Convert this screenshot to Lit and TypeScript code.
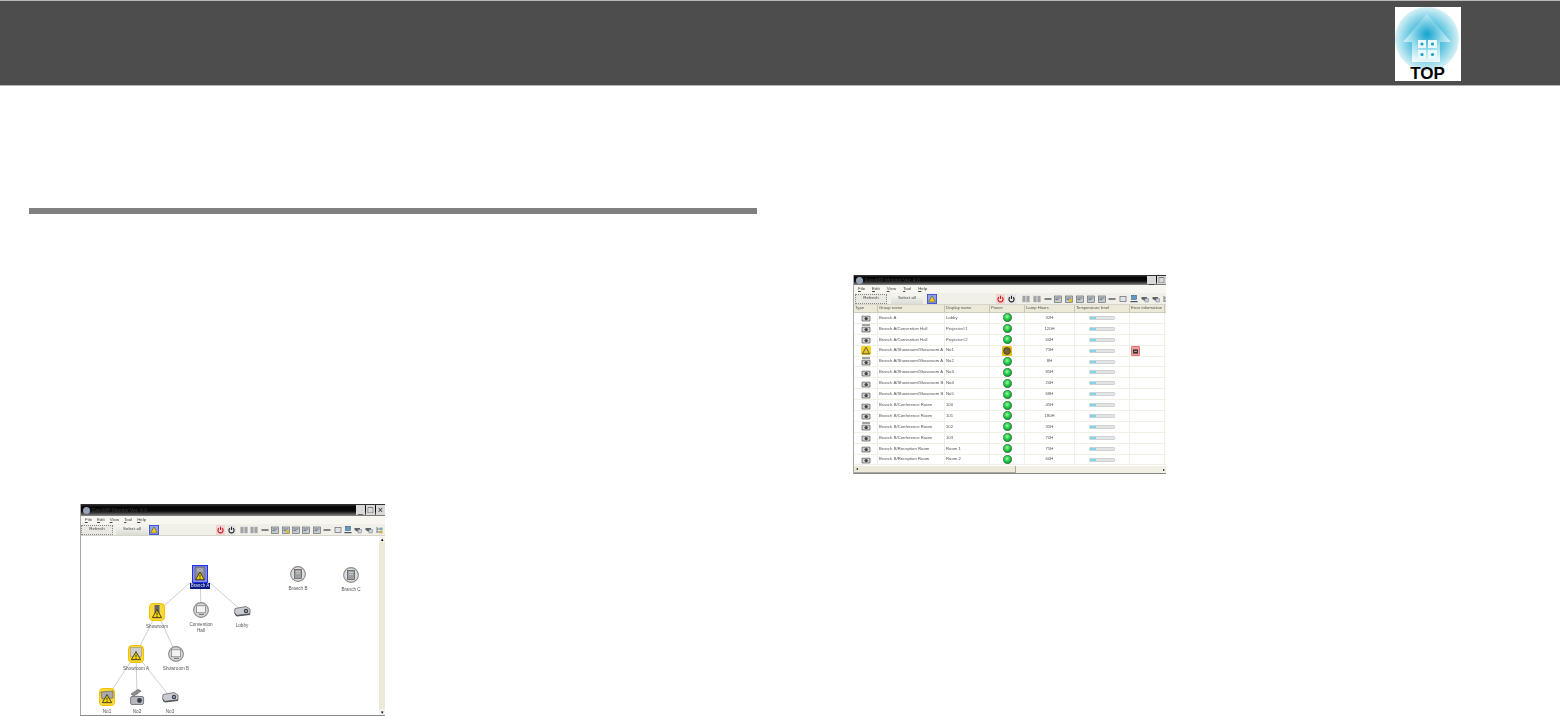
import { LitElement, html, css, svg } from "lit";
import { customElement } from "lit/decorators.js";

const warnTri = (x: number, y: number, s: number) => svg`
  <path d="M${x} ${y - s}L${x + s} ${y + s * 0.75}H${x - s}Z" fill="#f7d400" stroke="#222" stroke-width=".8" stroke-linejoin="round"/>
  <path d="M${x} ${y - s * 0.4}V${y + s * 0.25}M${x} ${y + s * 0.4}V${y + s * 0.6}" stroke="#111" stroke-width=".8"/>`;

const groupIcon = svg`<svg class="ic" viewBox="0 0 16 16" width="16" height="16">
  <circle cx="8" cy="8" r="7.4" fill="#dcdcdc" stroke="#8c8c8c" stroke-width="1.1"/>
  <rect x="4.4" y="3.6" width="7.2" height="8.8" fill="#9aa0a4" stroke="#555" stroke-width=".7"/>
  <path d="M6 5.5h4M6 7.3h4" stroke="#d8d8d8" stroke-width=".7"/></svg>`;

const roomIcon = svg`<svg class="ic" viewBox="0 0 16 16" width="16" height="16">
  <circle cx="8" cy="8" r="7.4" fill="#d6d6d6" stroke="#8c8c8c" stroke-width="1.1"/>
  <rect x="3.6" y="3.8" width="8.8" height="7" fill="#f3f3f3" stroke="#777" stroke-width=".7"/>
  <path d="M6 12.4h5" stroke="#666" stroke-width=".9"/></svg>`;

const projIcon = svg`<svg class="ic" viewBox="0 0 18 12" width="18" height="12">
  <path d="M2 3.5L13 1.5L17 4V9L4 10.5L1.5 8.5Z" fill="#c9cbd0" stroke="#55585e" stroke-width=".7"/>
  <path d="M2 8L4 10L17 8.6V10L4 11.6L2 10Z" fill="#55585e"/>
  <circle cx="13" cy="6" r="2.2" fill="#3b3f47"/><circle cx="13" cy="6" r="1" fill="#a8b4c4"/></svg>`;

const proj2Icon = svg`<svg class="ic" viewBox="0 0 16 18" width="16" height="18">
  <path d="M2 6L9 1.5L12 3L5 8Z" fill="#8a8d92" stroke="#555" stroke-width=".6"/>
  <rect x="1.6" y="8.5" width="13" height="8" rx="1.4" fill="#b5b8bd" stroke="#55585e" stroke-width=".7"/>
  <circle cx="10.5" cy="12.5" r="2.4" fill="#3b3f47"/></svg>`;

const warnBox = (inner: unknown, w = 16, h = 18) => svg`<svg class="ic" viewBox="0 0 16 18" width="${w}" height="${h}">
  <rect x=".5" y=".5" width="15" height="17" rx="3.4" fill="#f9d83a" stroke="#f2c200" stroke-width="1"/>
  ${inner}${warnTri(8, 11.2, 4.6)}</svg>`;

const NODES: [number, number, string, unknown, string?][] = [
  [200, 574, "Branch A", svg`<svg class="ic" viewBox="0 0 16 18" width="16" height="18">
     <rect x=".5" y=".5" width="15" height="17" fill="#8f95ef" stroke="#2530e8" stroke-width="1.2"/>
     <rect x="3" y="2" width="10" height="13" fill="#8d8f98" stroke="#44464f" stroke-width=".5"/>
     <path d="M5 4h6M5 6h6" stroke="#d6d6d6" stroke-width=".7"/>${warnTri(8, 11.4, 4.4)}</svg>`, "sel"],
  [157, 612, "Showroom", warnBox(svg`<rect x="5.5" y="2" width="5" height="13" fill="#666"/>`)],
  [201, 610, "Convention\nHall", roomIcon],
  [242, 611, "Lobby", projIcon],
  [136, 654, "Showroom A", warnBox(svg`<rect x="2.6" y="2.4" width="10.8" height="9" fill="#cfcfcf" stroke="#888" stroke-width=".5"/>`)],
  [176, 654, "Showroom B", roomIcon],
  [107, 697, "No1", warnBox(svg`<path d="M2 4L14 3V10L3 11Z" fill="#aaa" stroke="#555" stroke-width=".6"/>`)],
  [137, 697, "No2", proj2Icon],
  [170, 697, "No3", projIcon],
  [298, 574, "Branch B", groupIcon],
  [351, 575, "Branch C", groupIcon],
];
const EDGES = [[0, 1], [0, 2], [0, 3], [1, 4], [1, 5], [4, 6], [4, 7], [4, 8]];
const OX = 81, OY = 536;

const ROWS: [string, string, string, string, string?][] = [
  ["a", "Branch A", "Lobby", "32H"],
  ["b", "Branch A/Convention Hall", "Projector#1", "120H"],
  ["c", "Branch A/Convention Hall", "Projector#2", "60H"],
  ["w", "Branch A/Showroom/Showroom A", "No1", "75H", "e"],
  ["b", "Branch A/Showroom/Showroom A", "No2", "8H"],
  ["c", "Branch A/Showroom/Showroom A", "No3", "85H"],
  ["a", "Branch A/Showroom/Showroom B", "No4", "20H"],
  ["c", "Branch A/Showroom/Showroom B", "No5", "68H"],
  ["a", "Branch B/Conference Room", "100", "45H"],
  ["c", "Branch B/Conference Room", "101", "180H"],
  ["b", "Branch B/Conference Room", "102", "35H"],
  ["c", "Branch B/Conference Room", "103", "70H"],
  ["a", "Branch B/Reception Room", "Room 1", "75H"],
  ["c", "Branch B/Reception Room", "Room 2", "60H"],
];

const rowIcon = (k: string) => k === "w"
  ? svg`<svg class="ic" viewBox="0 0 10 9" width="10" height="9"><rect width="10" height="9" rx="1.4" fill="#f5d22a"/><path d="M5 1.2L8.6 7.8H1.4Z" fill="#e0c030" stroke="#333" stroke-width=".7"/></svg>`
  : svg`<svg class="ic" viewBox="0 0 10 9" width="10" height="9">
      ${k === "b" ? svg`<path d="M1 1h8" stroke="#444" stroke-width="1"/>` : ""}
      <path d="M1 3.2H9V8H1Z" fill="#d2d2d2" stroke="#555" stroke-width=".7"/>
      <circle cx="5.2" cy="5.6" r="1.7" fill="#444"/></svg>`;

const POWER = svg`<svg class="ic" viewBox="0 0 9 9" width="9" height="9"><defs><radialGradient id="g" cx=".45" cy=".4" r=".6"><stop offset="0" stop-color="#a8f5a8"/><stop offset=".55" stop-color="#1ccf42"/><stop offset="1" stop-color="#0d8a2e"/></radialGradient></defs><circle cx="4.5" cy="4.5" r="4.2" fill="url(#g)" stroke="#4a5a4d" stroke-width=".6"/></svg>`;
const POWERW = svg`<svg class="ic" viewBox="0 0 10 10" width="10" height="10"><rect width="10" height="10" rx="1.6" fill="#e8b917"/><circle cx="5" cy="5" r="3.4" fill="#77643a" stroke="#333" stroke-width=".7"/></svg>`;
const ERR = svg`<svg class="ic" viewBox="0 0 9 10" width="9" height="10"><rect x=".3" y=".3" width="8.4" height="9.4" rx="1.2" fill="#f1a0a0" stroke="#d23a3a" stroke-width=".7"/><path d="M2 3.4H7V7.6H2Z" fill="#333"/><path d="M3 5.4h3" stroke="#ddd" stroke-width=".7"/></svg>`;

const tbIcon = (i: number) => {
  const kinds = ["grid", "grid", "line", "proj", "projy", "proj", "proj", "proj", "line", "box", "net", "tag", "tag", "tree"];
  const k = kinds[i];
  return svg`<svg class="tb" viewBox="0 0 8 8" width="8" height="8">
    ${k === "grid" ? svg`<rect width="8" height="8" fill="#e3e3e3"/><path d="M.5 2h3M4.5 2h3M.5 4h3M4.5 4h3M.5 6h3M4.5 6h3" stroke="#555" stroke-width=".9"/>` : ""}
    ${k === "line" ? svg`<path d="M.5 4h7" stroke="#555" stroke-width="1.4"/>` : ""}
    ${k === "proj" || k === "projy" ? svg`<rect x=".4" y="1" width="7.2" height="6.4" fill="#c4cbcf" stroke="#5a5f63" stroke-width=".6"/><path d="M1.4 3h5M1.4 4.6h3" stroke="#556" stroke-width=".7"/>` : ""}
    ${k === "projy" ? svg`<circle cx="5.6" cy="5.6" r="1.6" fill="#d9c01a"/>` : ""}
    ${k === "box" ? svg`<rect x="1" y="1.4" width="6" height="5.2" fill="#dfe5e5" stroke="#667" stroke-width=".7"/>` : ""}
    ${k === "net" ? svg`<rect x="1.6" y=".4" width="4.8" height="4" fill="#5b9bd0" stroke="#345" stroke-width=".5"/><path d="M.4 6.6h7.2" stroke="#456" stroke-width="1.2"/>` : ""}
    ${k === "tag" ? svg`<path d="M.5 2H6V5.6H3L.5 4Z" fill="#5d6468"/><rect x="4" y="3.4" width="3.6" height="3.6" fill="#c6d2d6" stroke="#667" stroke-width=".4"/>` : ""}
    ${k === "tree" ? svg`<path d="M2 1v6M2 3h3M2 6h3" stroke="#667" stroke-width=".8"/><rect x="4.6" y="1.6" width="3" height="2.6" fill="#6fb4b0"/><rect x="4.6" y="4.8" width="3" height="2.6" fill="#d2b04a"/>` : ""}
  </svg>`;
};

const PWR_R = svg`<svg class="ic" viewBox="0 0 9 10" width="9" height="10"><rect width="9" height="10" fill="#f1d3d3"/><path d="M2.9 3.2A2.6 2.6 0 1 0 6.1 3.2M4.5 1.8V5" fill="none" stroke="#d01818" stroke-width="1.1"/></svg>`;
const PWR_K = svg`<svg class="ic" viewBox="0 0 9 10" width="9" height="10"><rect width="9" height="10" fill="#e6e6e6"/><path d="M2.9 3.2A2.6 2.6 0 1 0 6.1 3.2M4.5 1.8V5" fill="none" stroke="#222" stroke-width="1.1"/></svg>`;
const WARN_T = svg`<svg class="ic" viewBox="0 0 10 10" width="10" height="10"><rect x=".4" y=".4" width="9.2" height="9.2" fill="#8f9fe8" stroke="#2f3fd4" stroke-width=".8"/><path d="M5 1.8L8.4 8H1.6Z" fill="#eec91a" stroke="#444" stroke-width=".5"/></svg>`;

@customElement("app-root")
export class AppRoot extends LitElement {
  static styles = css`
    :host { display: block; width: 1560px; height: 716px; overflow: hidden; background: #fff; font-family: "Liberation Sans", Arial, sans-serif; }
    .header { height: 86px; box-sizing: border-box; background: #4d4d4d; border-top: 1px solid #b9b9b9; border-bottom: 1px solid #b4b4b4; display: flex; justify-content: flex-end; padding: 6px 99px 0 0; }
    .logo { display: block; }
    .main { display: grid; grid-template-columns: 786px 1fr; }
    .left { padding-left: 29px; }
    .rule { width: 728px; height: 6px; margin-top: 122px; background: #808080; }
    .win { box-sizing: border-box; background: #fff; overflow: hidden; filter: blur(.4px); display: flex; flex-direction: column; color: #555; font-size: 4.4px; line-height: 1; }
    .win-l { width: 305px; height: 212px; margin: 290px 0 0 51px; border-left: 1px solid #a8a8a8; border-bottom: 1px solid #888; }
    .win-r { width: 313px; height: 199px; margin: 189px 0 0 67px; border-left: 1px solid #a8a8a8; border-bottom: 1px solid #888; }
    .title { height: 12px; flex: none; background: linear-gradient(#3a3a3a, #050505 25%, #0c0c0c 60%, #8a8a8a); display: flex; align-items: center; padding: 0 0 0 2px; gap: 2px; }
    .win-r .title { height: 10px; }
    .appicon { width: 7px; height: 7px; border-radius: 50%; background: #98a2b8; }
    .appname { color: #3a3a3a; font-size: 5px; }
    .ctl { margin-left: auto; display: flex; gap: 1px; align-self: stretch; padding: 1px 0; }
    .ctl span { width: 9px; background: #d9d9d9; color: #222; font-size: 9px; display: flex; align-items: center; justify-content: center; }
    .menu { height: 8px; flex: none; display: flex; align-items: center; background: #f7f6f0; }
    .menu span { color: #444; }
    .win-l .menu { padding-left: 4px; gap: 5px; }
    .win-r .menu { padding-left: 4px; gap: 7px; }
    .toolbar { height: 11px; flex: none; display: flex; align-items: center; background: #f0efe8; border-bottom: 1px solid #d6d5cc; overflow: hidden; }
    .btn { width: 32px; height: 10px; box-sizing: border-box; display: flex; align-items: center; justify-content: center; background: #e9e8e2; color: #444; margin-right: 4px; flex: none; }
    .win-l .btn.plain { margin-right: 1px; }
    .win-l .btn.focus { margin-right: 3px; }
    .btn.focus { border: 1px dotted #888; }
    .btn.plain { background: linear-gradient(#f7f7f4, #dcdcd6); }
    .tb { flex: none; }
    .tools { display: flex; align-items: center; flex: none; }
    .win-l .tools { gap: 2.4px; margin-left: 4px; }
    .win-r .tools { gap: 2.8px; margin-left: 6px; }
    .pwr { display: flex; gap: 2px; flex: none; }
    .win-l .pwr { margin-left: 57px; }
    .win-r .pwr { margin-left: 59px; }
    .win-r .btn:first-child { margin-left: 1px; }
    .body { position: relative; flex: 1; display: flex; min-height: 0; }
    .canvas { position: relative; flex: 1; }
    .canvas > svg { position: absolute; left: 0; top: 0; }
    .node { position: absolute; transform: translateX(-50%); display: flex; flex-direction: column; align-items: center; gap: 3px; width: 40px; }
    .node.sel { gap: 0; }
    .slot { height: 18px; display: flex; align-items: center; justify-content: center; }
    .ic { display: block; flex: none; }
    .lbl { text-align: center; white-space: pre; color: #555; font-size: 4.6px; line-height: 5.5px; padding: 0 1px; }
    .node.sel .lbl { background: #0a1a80; color: #dfe3ff; }
    .vbar { width: 6px; flex: none; background: #ece9d8; display: flex; flex-direction: column; justify-content: space-between; }
    .vbar i { height: 6px; background: #f6f5ef; color: #000; font-size: 5px; font-style: normal; display: flex; align-items: center; justify-content: center; line-height: 1; }
    .grid { display: grid; grid-template-columns: 24px 67px 45px 35px 50px 55px 35px; flex: none; align-items: center; }
    .head { height: 7px; background: #ece9d8; border-bottom: 1px solid #cfccbb; color: #555; font-size: 4.2px; }
    .head span { padding-left: 1px; border-right: 1px solid #c8c5b4; height: 100%; display: flex; align-items: center; box-sizing: border-box; white-space: nowrap; overflow: hidden; }
    .row { height: 10.9px; box-sizing: border-box; border-bottom: 1px solid #f1f0e6; font-size: 4.25px; }
    .row > div { display: flex; align-items: center; height: 100%; border-right: 1px solid #f1f0e6; box-sizing: border-box; white-space: nowrap; overflow: hidden; padding-left: 1px; }
    .row > .mid { justify-content: center; padding-left: 0; }
    .bar { width: 26px; height: 4px; box-sizing: border-box; background: linear-gradient(90deg, #7fd6e6 0 6px, #e2e4e4 6px); border: 1px solid #cfd2d2; border-radius: 1px; }
    .table { flex: 1; min-width: 0; display: flex; flex-direction: column; overflow: hidden; }
    .hbar { height: 7px; flex: none; background: #f2f0e4; display: flex; align-items: stretch; justify-content: space-between; }
    .thumb { width: 162px; background: #ece9d8; border-right: 1px solid #a8a8a0; border-bottom: 1px solid #a8a8a0; display: flex; align-items: center; padding-left: 2px; box-sizing: border-box; color: #000; font-size: 4px; }
    .hbar i { font-style: normal; color: #000; font-size: 4px; display: flex; align-items: center; padding-right: 1px; }
  `;

  private renderTitle(close: boolean) {
    return html`<div class="title"><span class="appicon"></span><span class="appname">EasyMP Monitor Ver. 4.0</span>
      <div class="ctl"><span>_</span><span>□</span>${close ? html`<span>×</span>` : ""}</div></div>`;
  }
  private renderMenu() {
    return html`<div class="menu">${["File", "Edit", "View", "Tool", "Help"].map((m) => html`<span><u>${m[0]}</u>${m.slice(1)}</span>`)}</div>`;
  }
  private renderToolbar() {
    return html`<div class="toolbar">
      <div class="btn focus">Refresh</div><div class="btn plain">Select all</div>
      ${WARN_T}
      <div class="pwr">${PWR_R}${PWR_K}</div>
      <div class="tools">${Array.from({ length: 14 }, (_, i) => tbIcon(i))}</div>
    </div>`;
  }
  render() {
    return html`
      <div class="header">
        <svg class="logo" width="66" height="74" viewBox="0 0 66 74">
          <defs>
            <radialGradient id="lg" cx=".5" cy=".5" r=".5"><stop offset="0" stop-color="#0fa0cc"/><stop offset=".55" stop-color="#62c6e0"/><stop offset="1" stop-color="#d8f1f7"/></radialGradient>
            <radialGradient id="hs" cx=".5" cy=".42" r=".62"><stop offset="0" stop-color="#14a2cf"/><stop offset=".55" stop-color="#a0deed"/><stop offset="1" stop-color="#f6fcfe"/></radialGradient>
          </defs>
          <rect width="66" height="74" fill="#fff"/>
          <circle cx="32" cy="32" r="32" fill="url(#lg)"/>
          <path d="M32 7L56 35H45V55H17V35H8Z" fill="url(#hs)"/>
          <g fill="#e8f8fb"><rect x="23" y="33" width="8" height="8"/><rect x="33" y="33" width="9" height="8"/><rect x="23" y="43" width="8" height="9"/><rect x="33" y="43" width="9" height="9"/></g>
          <g fill="#1d9cc8"><circle cx="27" cy="37" r="1.6"/><circle cx="37.5" cy="37" r="1.6"/><circle cx="27" cy="47.5" r="1.6"/><circle cx="37.5" cy="47.5" r="1.6"/></g>
          <text x="32.5" y="71.5" text-anchor="middle" font-family="Liberation Sans" font-weight="700" font-size="17" fill="#000">TOP</text>
        </svg>
      </div>
      <div class="main">
        <div class="left">
          <div class="rule"></div>
          <div class="win win-l">
            ${this.renderTitle(true)}${this.renderMenu()}${this.renderToolbar()}
            <div class="body">
              <div class="canvas">
                <svg width="298" height="180">
                  ${EDGES.map(([a, b]) => svg`<line x1="${NODES[a][0] - OX}" y1="${NODES[a][1] - OY}" x2="${NODES[b][0] - OX}" y2="${NODES[b][1] - OY}" stroke="#cfcfcf" stroke-width="1"/>`)}
                </svg>
                ${NODES.map(([x, y, label, icon, cls]) => html`
                  <div class="node ${cls ?? ""}" style="left:${x - OX}px;top:${y - OY - 9}px">
                    <div class="slot">${icon}</div><span class="lbl">${label}</span>
                  </div>`)}
              </div>
              <div class="vbar"><i>▴</i><i>▾</i></div>
            </div>
          </div>
        </div>
        <div>
          <div class="win win-r">
            ${this.renderTitle(false)}${this.renderMenu()}${this.renderToolbar()}
            <div class="table">
              <div class="grid head"><span>Type</span><span>Group name</span><span>Display name</span><span>Power</span><span>Lamp Hours</span><span>Temperature level</span><span>Error information</span></div>
              ${ROWS.map(([k, g, d, h, e]) => html`
                <div class="grid row">
                  <div class="mid">${rowIcon(k)}</div><div>${g}</div><div>${d}</div>
                  <div class="mid">${k === "w" ? POWERW : POWER}</div>
                  <div class="mid">${h}</div>
                  <div class="mid"><span class="bar"></span></div>
                  <div>${e ? ERR : ""}</div>
                </div>`)}
            </div>
            <div class="hbar"><div class="thumb">◂</div><i>▸</i></div>
          </div>
        </div>
      </div>`;
  }
}
